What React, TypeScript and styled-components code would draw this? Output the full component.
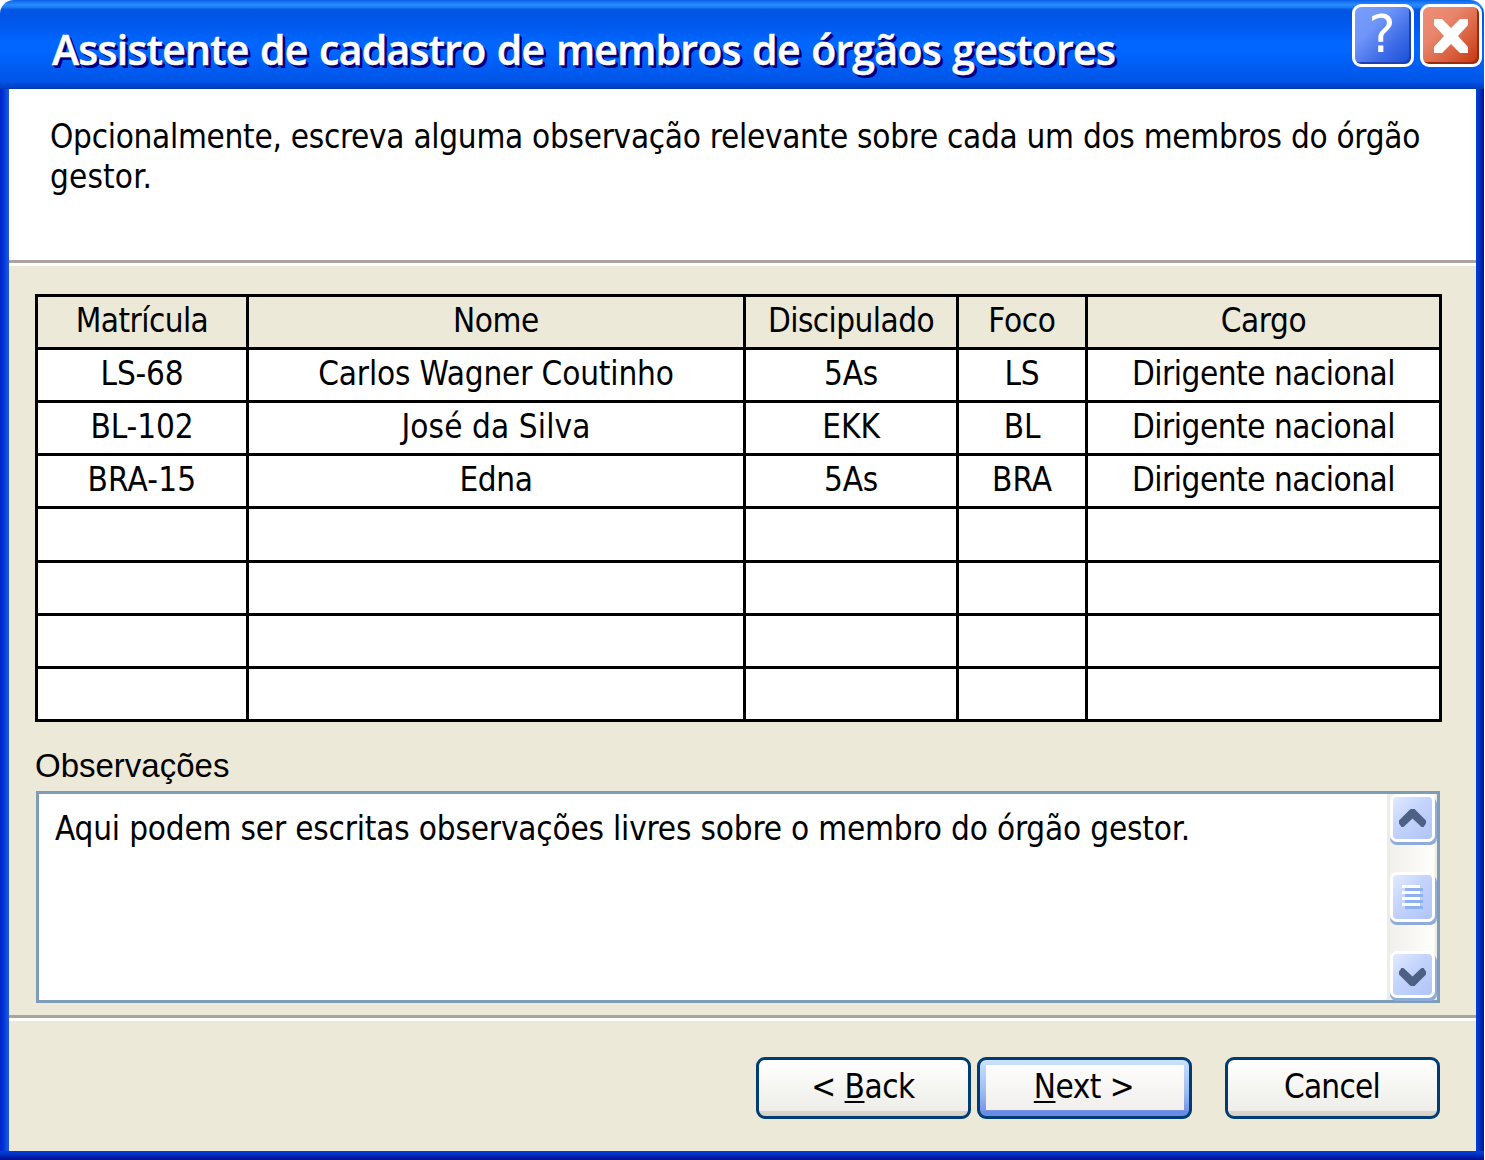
import React from "react";
import styled, { createGlobalStyle } from "styled-components";

const tahoma = '"DejaVu Sans Condensed", "DejaVu Sans", "Noto Sans", sans-serif';

const GlobalStyle = createGlobalStyle`
  *, *::before, *::after { box-sizing: border-box; }
  html, body { margin: 0; background: #fff; overflow: hidden; }
`;

const Window = styled.div`
  width: 1484px;
  height: 1160px;
  display: grid;
  grid-template-rows: 89px 1fr 9px;
  border-radius: 14px 14px 0 0;
  overflow: hidden;
  font-family: ${tahoma};
  font-size: 33px;
  color: #000;
`;

const TitleBar = styled.header`
  display: flex;
  justify-content: space-between;
  align-items: flex-start;
  padding: 4px 2px 0 52px;
  background: linear-gradient(
    to bottom,
    #0a62e8 0,
    #1c7df8 3px,
    #2a8cff 5px,
    #1874f4 8px,
    #0558e4 9px,
    #0055e5 12px,
    #0058ec 24px,
    #0066ff 42px,
    #0066ff 52px,
    #005cf2 68px,
    #0055e6 82px,
    #0048d4 84px,
    #0043cb 87px,
    #0238b0 89px
  );
`;

const Title = styled.h1`
  margin: 17px 0 0;
  font: 600 41px/56px "Open Sans", "Noto Sans", sans-serif;
  letter-spacing: -0.75px;
  word-spacing: 1.5px;
  white-space: nowrap;
  color: #fff;
  -webkit-text-stroke: 0.5px #fff;
  text-shadow: 1px 1px 0 #000080, 2px 2px 0 #000080, 3px 3px 0 #000080;
`;

const Controls = styled.div`
  display: flex;
  gap: 6px;
`;

const Control = styled.button<{ $kind: "help" | "close" }>`
  width: 62px;
  height: 63px;
  padding: ${p => (p.$kind === "help" ? "0 2px 2px 0" : "0 1px 0 0")};
  border: 3px solid #fff;
  border-radius: 9px;
  display: grid;
  place-items: center;
  background: ${p =>
    p.$kind === "help"
      ? "linear-gradient(135deg, #7b9ffb 0%, #6f95f8 35%, #3f6ce8 65%, #0f49d2 100%)"
      : "linear-gradient(135deg, #ee9079 0%, #e8866c 35%, #d9603f 65%, #c12c04 100%)"};
  background-origin: border-box;
  box-shadow: inset -2px -2px 0 ${p => (p.$kind === "help" ? "#1c40b4" : "#9c2a10")};
`;

const QuestionMark = styled.span`
  font: 400 51px/56px "DejaVu Sans", sans-serif;
  color: #fff;
`;

const Frame = styled.div`
  min-height: 0;
  padding: 0 8px 0 9px;
  display: grid;
  background:
    linear-gradient(to right, #0026c8 0, #0030d8 3px, #1450e0 7px, #1c58e0 9px) left / 9px 100% no-repeat,
    linear-gradient(to right, #0040d8 0, #0034c8 3px, #001ca8 6px, #000f8c 8px) right / 8px 100% no-repeat;
`;

const FrameBottom = styled.div`
  background: linear-gradient(to bottom, #0040d8 0, #0034c8 3px, #001ea8 6px, #000c88 9px);
`;

const Client = styled.main`
  display: flex;
  flex-direction: column;
  min-width: 0;
  background: #ece9d8;
`;

const Intro = styled.section`
  height: 171px;
  padding: 28px 0 0 41px;
  background: #fff;
`;

const IntroLine = styled.div<{ $ls: number }>`
  line-height: 40px;
  white-space: nowrap;
  letter-spacing: ${p => p.$ls}px;
`;

const Divider = styled.hr`
  margin: 0;
  height: 6px;
  border: 0;
  flex: none;
  background: linear-gradient(to bottom, #aca39c 0 3px, #fff 3px 6px);
`;

const Body = styled.section`
  height: 749px;
  padding: 28px 35px 0 26px;
`;

const Table = styled.div`
  width: 1407px;
  padding: 3px;
  display: grid;
  grid-template-columns: 208px 494px 210px 126px 351px;
  grid-template-rows: repeat(4, 50px) 51px repeat(3, 50px);
  gap: 3px;
  background: #000;
`;

const Cell = styled.div<{ $head?: boolean; $ls: number }>`
  text-align: center;
  line-height: 48px;
  white-space: nowrap;
  letter-spacing: ${p => p.$ls}px;
  background: ${p => (p.$head ? "#ece9d8" : "#fff")};
`;

const Label = styled.div`
  height: 69px;
  padding-top: 25px;
  font: 33px/38px "Liberation Sans", Arial, sans-serif;
`;

const Memo = styled.div`
  margin-left: 1px;
  width: 1404px;
  height: 212px;
  border: 3px solid #7f9db9;
  background: #fff;
  display: flex;
  justify-content: space-between;
`;

const MemoText = styled.div`
  padding: 15px 0 0 16px;
  line-height: 40px;
  white-space: nowrap;
  letter-spacing: -0.18px;
`;

const ScrollBar = styled.div`
  width: 50px;
  display: flex;
  flex-direction: column;
  justify-content: space-between;
  padding-bottom: 2px;
  border-left: 3px solid #eeede5;
  background: linear-gradient(to right, #f1f0ec, #fefefb 44px, #eeede5 45px);
`;

const ScrollButton = styled.div<{ $h: number; $shift?: number }>`
  width: 45px;
  height: ${p => p.$h}px;
  padding-top: ${p => p.$shift ?? 0}px;
  border: 3px solid #fff;
  border-radius: 7px;
  display: grid;
  place-items: center;
  background: linear-gradient(135deg, #e1eafe 0%, #c3d3fd 45%, #b0c4f6 100%);
  box-shadow: 0 3px 0 #8fabd8, 1px 3px 0 #8fabd8, 2px 3px 0 #8fabd8;
`;

const Footer = styled.footer`
  flex: 1;
  display: flex;
  align-items: flex-start;
  padding: 36px 36px 0 0;
  justify-content: flex-end;
`;

const PushButton = styled.button<{ $primary?: boolean; $gap?: number; $ls: number }>`
  width: 215px;
  height: 62px;
  margin-left: ${p => p.$gap ?? 0}px;
  padding: 0 1px 2px 0;
  border: 3px solid #003c74;
  border-radius: 9px;
  font: 33px/40px ${tahoma};
  letter-spacing: ${p => p.$ls}px;
  color: #000;
  background: ${p =>
    p.$primary
      ? "linear-gradient(#fdfdfc, #f0efec) 6px 5px / 198px 45px no-repeat, linear-gradient(transparent 51px, #6a8ae4 51px) 0 0 / 100% 100%, linear-gradient(to bottom, #cbe1ff, #9bb9f0 60%, #6a8ae4)"
      : "linear-gradient(#fff 0, #f5f5f2 50%, #eeede9 51px, #dad6cc 51px, #d4d0c6 56px)"};
`;

const Key = styled.span`
  text-decoration: underline;
  text-decoration-thickness: 2px;
  text-underline-offset: 3px;
`;

type Entry = [text: string, spacing: number];

const header: Entry[] = [
  ["Matrícula", -0.55],
  ["Nome", -0.4],
  ["Discipulado", -0.55],
  ["Foco", -0.3],
  ["Cargo", -0.4],
];
const role: Entry = ["Dirigente nacional", -0.48];
const members: Entry[][] = [
  [["LS-68", -0.2], ["Carlos Wagner Coutinho", -0.15], ["5As", -0.2], ["LS", -0.2], role],
  [["BL-102", -0.1], ["José da Silva", 0.1], ["EKK", 0], ["BL", -0.2], role],
  [["BRA-15", 0.2], ["Edna", -0.4], ["5As", -0.2], ["BRA", 0], role],
];
const emptyRows: Entry[][] = Array.from({ length: 4 }, () =>
  Array.from({ length: 5 }, (): Entry => ["", 0])
);

function Chevron({ down }: { down?: boolean }) {
  return (
    <svg width="27" height="18" viewBox="0 0 27 18">
      <path
        d="M11.500 0H15.500L27 11.500V14.500L24.500 18H22.500L13.500 9.500L4.500 18H2.500L0 14.500V11.500Z"
        fill="#4d6185"
        transform={down ? "translate(0 18) scale(1 -1)" : undefined}
      />
    </svg>
  );
}

function Grip() {
  return (
    <svg width="21" height="24" viewBox="0 0 21 24" shapeRendering="crispEdges">
      {[0, 6, 12, 18].map(y => (
        <g key={y}>
          <rect x="3" y={y + 3} width="18" height="3" fill="#8cb0f0" />
          <rect x="0" y={y} width="18" height="3" fill="#fff" />
        </g>
      ))}
    </svg>
  );
}

export default function App() {
  return (
    <>
      <GlobalStyle />
      <Window>
        <TitleBar>
          <Title>Assistente de cadastro de membros de órgãos gestores</Title>
          <Controls>
            <Control $kind="help"><QuestionMark>?</QuestionMark></Control>
            <Control $kind="close">
              <svg width="34" height="34" viewBox="0 0 34 34">
                <path d="M0 0H8L17 9L26 0H34V6L24 17L34 28V34H26L17 25L8 34H0V28L10 17L0 6Z" fill="#fff" />
              </svg>
            </Control>
          </Controls>
        </TitleBar>
        <Frame>
          <Client>
            <Intro>
              <IntroLine $ls={-0.285}>
                Opcionalmente, escreva alguma observação relevante sobre cada um dos membros do órgão
              </IntroLine>
              <IntroLine $ls={0.15}>gestor.</IntroLine>
            </Intro>
            <Divider />
            <Body>
              <Table>
                {header.map(([text, ls]) => <Cell key={text} $head $ls={ls}>{text}</Cell>)}
                {[...members, ...emptyRows].flatMap((row, r) =>
                  row.map(([text, ls], c) => <Cell key={`${r}-${c}`} $ls={ls}>{text}</Cell>)
                )}
              </Table>
              <Label>Observações</Label>
              <Memo>
                <MemoText>Aqui podem ser escritas observações livres sobre o membro do órgão gestor.</MemoText>
                <ScrollBar>
                  <ScrollButton $h={48}><Chevron /></ScrollButton>
                  <ScrollButton $h={50} $shift={1}><Grip /></ScrollButton>
                  <ScrollButton $h={47} $shift={4}><Chevron down /></ScrollButton>
                </ScrollBar>
              </Memo>
            </Body>
            <Divider />
            <Footer>
              <PushButton $ls={-0.45}>&lt; <Key>B</Key>ack</PushButton>
              <PushButton $primary $gap={6} $ls={-0.5}><Key>N</Key>ext &gt;</PushButton>
              <PushButton $gap={33} $ls={-0.75}>Cancel</PushButton>
            </Footer>
          </Client>
        </Frame>
        <FrameBottom />
      </Window>
    </>
  );
}
